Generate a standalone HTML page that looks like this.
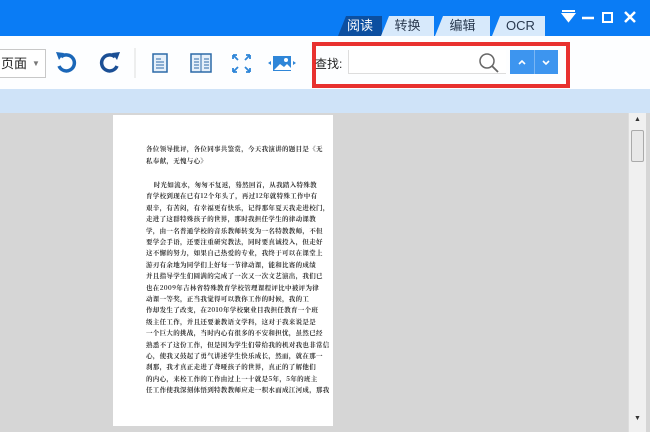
<!DOCTYPE html>
<html><head><meta charset="utf-8"><style>
*{margin:0;padding:0;box-sizing:border-box}
body{width:650px;height:432px;overflow:hidden;position:relative;font-family:"Liberation Sans","Noto Sans CJK SC",sans-serif;background:#d6d6d6}
.abs{position:absolute}
.top{left:0;top:0;width:650px;height:36px;background:#0a7cf5}
.tool{left:0;top:36px;width:650px;height:53px;background:#fdfeff}
.strip{left:0;top:89px;width:650px;height:24px;background:#cfe3f8}
.tab{top:16px;height:20px;font-size:13px;line-height:20px;text-align:center;color:#2a3a50;background:#d7e9fb;clip-path:polygon(8px 0,100% 0,100% 100%,0 100%)}
.page{left:113px;top:115px;width:220px;height:311px;background:#fff}
.txt{position:absolute;left:146px;font-size:6.5px;line-height:8px;color:#333;white-space:nowrap;font-family:"Noto Serif CJK SC",serif;letter-spacing:0.3px;font-weight:bold}
</style></head><body>
<div class="abs top"></div>
<div class="abs tab" style="left:338px;width:44px;background:#0c4fa0;color:#fff">阅读</div>
<div class="abs tab" style="left:381px;width:53px">转换</div>
<div class="abs tab" style="left:435px;width:55px">编辑</div>
<div class="abs tab" style="left:492px;width:53px;padding-left:4px">OCR</div>
<svg class="abs" style="left:558px;top:8px" width="88" height="20">
<path d="M4 3h13M5 6h11l-5.5 7z" stroke="#fff" stroke-width="2" fill="#fff"/>
<path d="M24 10h12" stroke="#fff" stroke-width="2.5"/>
<rect x="45" y="5" width="9" height="9" stroke="#fff" stroke-width="2" fill="none"/>
<path d="M67 4l10 10M77 4l-10 10" stroke="#fff" stroke-width="2.5"/>
</svg>
<div class="abs tool"></div>
<div class="abs" style="left:-2px;top:49px;width:48px;height:29px;border:1px solid #c8c8c8;background:#fff;font-size:13px;line-height:27px;padding-left:2px;color:#222">页面<span style="position:absolute;left:33px;top:0;font-size:8px;color:#777">▼</span></div>
<svg class="abs" style="left:52px;top:48px" width="250" height="30">
<path d="M9 9a8 8 0 1 1 -2 9" stroke="#1b67b8" stroke-width="3.5" fill="none"/><path d="M4 4l8 1-5 7z" fill="#1b67b8"/>
<path d="M63 9a8 8 0 1 0 2 9" stroke="#1b4f95" stroke-width="3.5" fill="none"/><path d="M68 4l-8 1 5 7z" fill="#1b4f95"/>
<path d="M83 0v30" stroke="#ddd"/>
<rect x="101" y="6" width="14" height="18" stroke="#2d6aa8" stroke-width="1.5" fill="#e6f0fa"/><path d="M104 11h5M104 14h8M104 17h8M104 20h8" stroke="#2d6aa8"/>
<rect x="139" y="6" width="20" height="18" stroke="#2d6aa8" stroke-width="1.5" fill="#e6f0fa"/><path d="M149 6v18M142 11h5M142 14h5M142 17h5M142 20h5M152 11h5M152 14h5M152 17h5M152 20h5" stroke="#2d6aa8"/>
<path d="M181 7l5 5M181 7h4M181 7v4M198 7l-5 5M198 7h-4M198 7v4M181 24l5-5M181 24h4M181 24v-4M198 24l-5-5M198 24h-4M198 24v-4" stroke="#2f86d8" stroke-width="1.8" fill="none"/>
<rect x="221" y="8" width="18" height="15" fill="#2f86d8"/><path d="M222 22l6-6 4 3 3-3 4 4v2z" fill="#fff"/><circle cx="234" cy="12" r="2" fill="#fff"/><path d="M216 15l3-2v4zM244 15l-3-2v4z" fill="#2f86d8"/>
</svg>
<div class="abs" style="left:312px;top:42px;width:258px;height:46px;border:4px solid #e8312f"></div>
<div class="abs" style="left:315px;top:55px;font-size:12px;color:#222">查找:</div>
<div class="abs" style="left:348px;top:50px;width:158px;height:24px;border-left:1px solid #ddd;border-bottom:1px solid #ddd;background:#fff"></div>
<svg class="abs" style="left:478px;top:52px" width="22" height="22"><circle cx="9" cy="9" r="7" stroke="#666" stroke-width="1.5" fill="none"/><path d="M14 14l6 6" stroke="#666" stroke-width="1.8"/></svg>
<div class="abs" style="left:510px;top:50px;width:48px;height:24px;background:#3d95ef"></div>
<div class="abs" style="left:534px;top:50px;width:1px;height:24px;background:#7ab6f4"></div>
<svg class="abs" style="left:510px;top:50px" width="48" height="24"><path d="M9 14l3-3 3 3M33 11l3 3 3-3" stroke="#fff" stroke-width="1.6" fill="none"/></svg>
<div class="abs strip"></div>
<div class="abs" style="left:628px;top:113px;width:18px;height:319px;background:#f0f0f0;border-left:1px solid #ddd"></div>
<div class="abs" style="left:631px;top:130px;width:13px;height:32px;background:#e8e8e8;border:1px solid #aaa;border-radius:2px"></div>
<div class="abs" style="left:634px;top:116px;font-size:7px;color:#333">▲</div>
<div class="abs" style="left:634px;top:415px;font-size:7px;color:#333">▼</div>
<div class="abs page"></div>
<div class="txt" style="top:145px">各位领导批评，各位同事共鉴赏，今天我演讲的题目是《无</div>
<div class="txt" style="top:157px">私奉献，无愧与心》</div>
<div class="txt" style="top:181px">&nbsp;&nbsp;&nbsp;&nbsp;时光如流水，匆匆不复返，蓦然回首，从我踏入特殊教</div>
<div class="txt" style="top:192.4px">育学校到现在已有12个年头了，再过12年就特殊工作中有</div>
<div class="txt" style="top:203.8px">艰辛，有苦闷，有幸福更有快乐，记得那年夏天我走进校门，</div>
<div class="txt" style="top:215.2px">走进了这群特殊孩子的世界，那时我担任学生的律动课教</div>
<div class="txt" style="top:226.6px">学，由一名普通学校的音乐教师转变为一名特教教师，不但</div>
<div class="txt" style="top:238px">要学会手语，还要注重研究教法，同时要真诚投入，但走好</div>
<div class="txt" style="top:249.4px">这不懈的努力，如果自己热爱的专业，我终于可以在课堂上</div>
<div class="txt" style="top:260.8px">游刃有余地为同学们上好每一节律动课，能和比赛的成绩</div>
<div class="txt" style="top:272.2px">并且指导学生们圆满的完成了一次又一次文艺演出，我们已</div>
<div class="txt" style="top:283.6px">也在2009年吉林省特殊教育学校管理课程评比中被评为律</div>
<div class="txt" style="top:295px">动课一等奖，正当我觉得可以教你工作的时候，我的工</div>
<div class="txt" style="top:306.4px">作却发生了改变，在2010年学校聚业目我担任教育一个班</div>
<div class="txt" style="top:317.8px">级主任工作，并且还要兼教语文学科，这对于我来说是是</div>
<div class="txt" style="top:329.2px">一个巨大的挑战，当时内心有很多的不安和担忧，虽然已经</div>
<div class="txt" style="top:340.6px">熟悉不了这份工作，但是因为学生们带给我的机对我也非常信</div>
<div class="txt" style="top:352px">心，使我又鼓起了勇气讲述学生快乐成长，然而，就在那一</div>
<div class="txt" style="top:363.4px">刹那，我才真正走进了聋哑孩子的世界，真正的了解他们</div>
<div class="txt" style="top:374.8px">的内心，来校工作的工作由过上一十就是5年，5年的班主</div>
<div class="txt" style="top:386.2px">任工作使我深刻体悟到特教教师应走一积水而成江河成，那我</div>
</body></html>
